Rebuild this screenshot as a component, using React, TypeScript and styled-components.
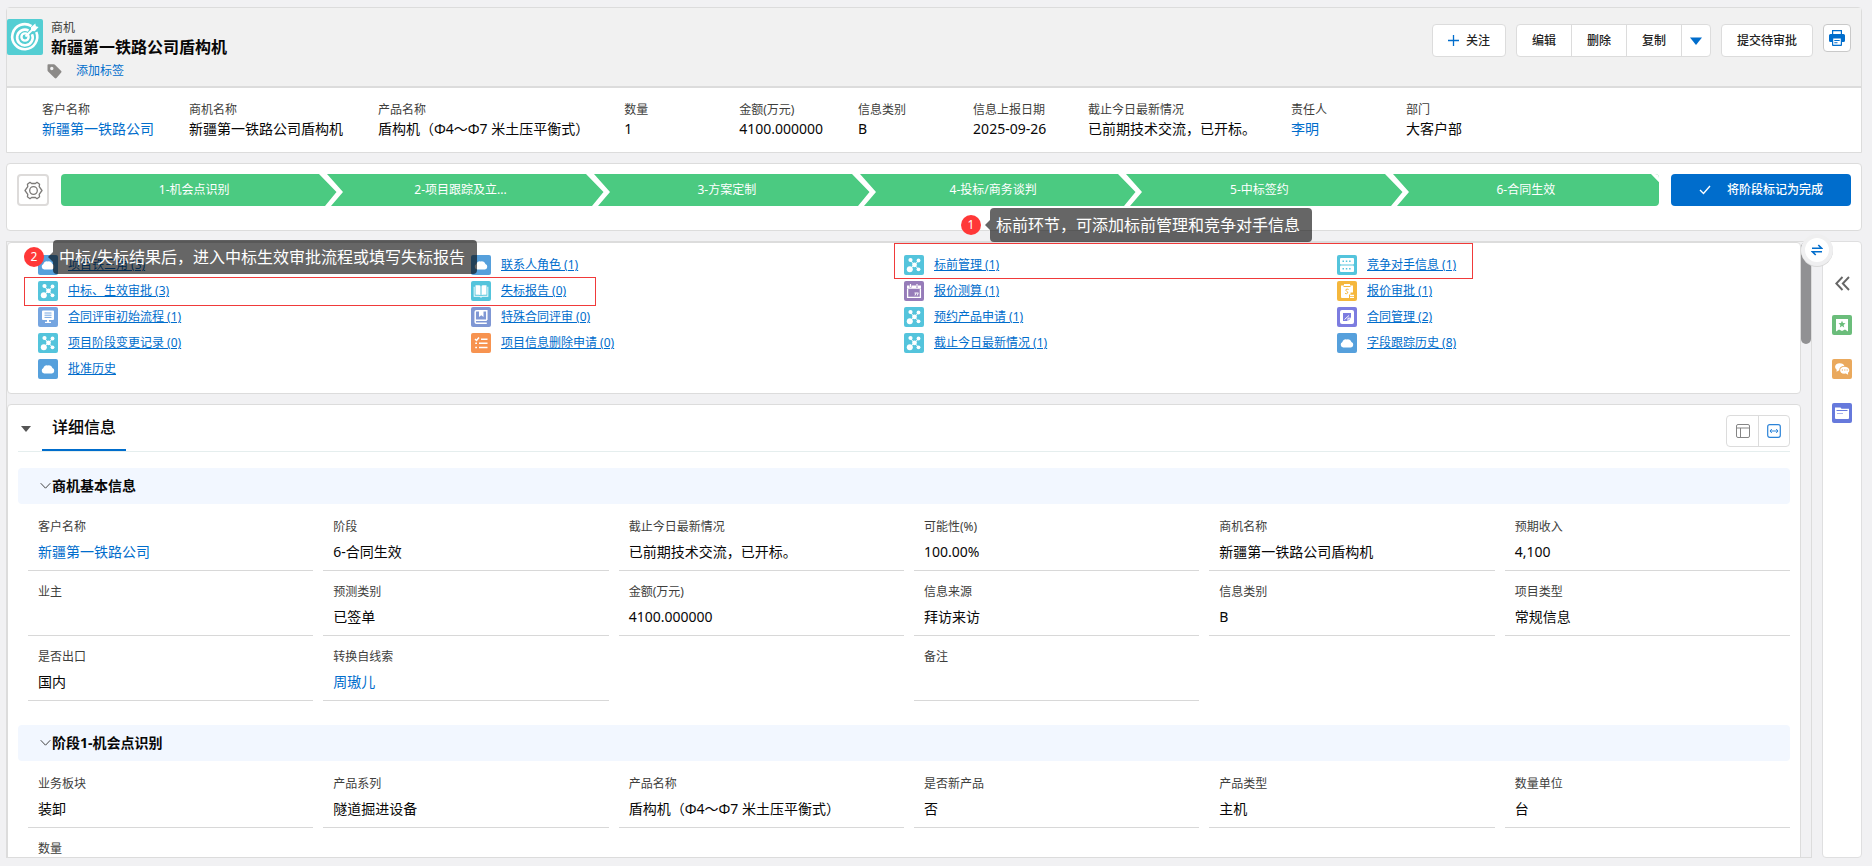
import React from 'react';
import styled, { createGlobalStyle } from 'styled-components';

const BLUE = '#006dcc';
const LINE = '#dcdcdc';

const GlobalStyle = createGlobalStyle`
  *, *::before, *::after { box-sizing: border-box; }
  body {
    margin: 0;
    background: #f1f1f3;
    color: #080707;
    font-family: "Noto Sans", "Noto Sans CJK SC", sans-serif;
    font-size: 14px;
    line-height: 20px;
  }
  button { font: inherit; color: inherit; cursor: pointer; padding: 0; }
  a { color: ${BLUE}; text-decoration: none; }
  dl, dt, dd, ul, ol, h1, h2, h3, p { margin: 0; padding: 0; font-size: inherit; }
  ul, ol { list-style: none; }
  svg { display: block; flex: none; }
`;

const Page = styled.div`
  display: flex;
  flex-direction: column;
  gap: 10px;
  height: 100vh;
  min-height: 600px;
  padding: 7px 10px 8px 6px;
  overflow: hidden;
`;

/* ---------- record header ---------- */

const HeaderCard = styled.header`
  flex: none;
  border: 1px solid ${LINE};
  border-radius: 4px 4px 0 0;
`;

const HeaderTop = styled.div`
  display: flex;
  justify-content: space-between;
  align-items: flex-start;
  height: 80px;
  background: #f1f1f1;
  border-bottom: 2px solid ${LINE};
`;

const Identity = styled.div`
  display: flex;
  gap: 8px;
  padding-top: 11px;
`;

const TitleBlock = styled.div`
  display: flex;
  flex-direction: column;
`;

const ObjectName = styled.p`
  color: #3e3e3c;
  font-size: 12px;
  line-height: 17px;
`;

const RecordTitle = styled.h1`
  font-size: 16px;
  line-height: 22px;
  font-weight: 700;
`;

const TagRow = styled.div`
  display: flex;
  align-items: center;
  gap: 14px;
  margin-left: -4px;
  font-size: 12px;
  line-height: 26px;
`;

const Actions = styled.div`
  display: flex;
  gap: 10px;
  padding: 16px 10px 0 0;
`;

const ButtonGroup = styled.div`
  display: flex;
  height: 33px;
  background: #fff;
  border: 1px solid ${LINE};
  border-radius: 4px;
`;

const ActionButton = styled.button<{ $narrow?: boolean }>`
  display: flex;
  align-items: center;
  gap: 7px;
  padding: 0 ${p => (p.$narrow ? 8 : 15)}px;
  border: 0;
  border-left: 1px solid ${LINE};
  background: none;
  color: #222;
  font-size: 12px;
  font-weight: 500;
  &:first-child { border-left: 0; }
`;

const PrintButton = styled.button`
  display: flex;
  justify-content: center;
  align-items: center;
  width: 28px;
  height: 28px;
  background: #fff;
  border: 1px solid #c9c9c9;
  border-radius: 4px;
`;

const Highlights = styled.dl`
  display: flex;
  gap: 35px;
  height: 64px;
  padding: 12px 35px 0;
  background: #fff;
`;

const Highlight = styled.div`
  min-width: 80px;
  white-space: nowrap;
`;

const Label = styled.dt`
  color: #3e3e3c;
  font-size: 12px;
  line-height: 20px;
`;

const Value = styled.dd`
  line-height: 20px;
`;

const HighlightValue = styled(Value)`
  line-height: 18px;
`;

/* ---------- stage path ---------- */

const PathCard = styled.section`
  display: flex;
  flex: none;
  gap: 12px;
  height: 68px;
  padding: 10px;
  background: #fff;
  border: 1px solid ${LINE};
  border-radius: 4px;
`;

const GearButton = styled.button`
  display: flex;
  justify-content: center;
  align-items: center;
  width: 32px;
  height: 32px;
  background: #fff;
  border: 2px solid #dddbda;
  border-radius: 4px;
`;

const Stages = styled.ol`
  display: flex;
  flex: 1;
  height: 32px;
  border-radius: 4px;
  overflow: hidden;
`;

const Stage = styled.li`
  position: relative;
  flex: 1 1 0;
  background: #4bca81;
  color: #fff;
  font-size: 12px;
  line-height: 32px;
  text-align: center;
`;

const StageEdge = styled.svg`
  position: absolute;
  top: 0;
  right: -18px;
  z-index: 1;
`;

const CompleteButton = styled.button`
  display: flex;
  align-items: center;
  justify-content: center;
  gap: 16px;
  width: 180px;
  height: 32px;
  border: 0;
  border-radius: 4px;
  background: ${BLUE};
  color: #fff;
  font-size: 12px;
  font-weight: 500;
`;

/* ---------- work area ---------- */

const Workspace = styled.div`
  display: flex;
  flex: 1;
  gap: 10px;
  min-height: 0;
`;

const Pane = styled.main`
  position: relative;
  display: flex;
  flex: 1;
  min-width: 0;
  border: 1px solid ${LINE};
`;

const PaneContent = styled.div`
  display: flex;
  flex: 1;
  flex-direction: column;
  gap: 10px;
  min-width: 0;
  overflow: hidden;
`;

const ScrollTrack = styled.div`
  flex: none;
  width: 10px;
`;

const ScrollThumb = styled.div`
  height: 102px;
  border-radius: 5px;
  background: #919193;
`;

const Card = styled.section`
  flex: none;
  background: #fff;
  border: 1px solid ${LINE};
  border-radius: 4px;
`;

const RelatedList = styled.ul`
  display: grid;
  grid-template-columns: repeat(4, 1fr);
  row-gap: 6px;
  padding: 12px 30px 14px;
`;

const RelatedItem = styled.li`
  display: flex;
  align-items: center;
  gap: 10px;
  height: 20px;
  font-size: 12px;
  a { text-decoration: underline; }
`;

const Tile = styled.span<{ $color: string; $size?: number }>`
  display: flex;
  flex: none;
  align-items: center;
  justify-content: center;
  width: ${p => p.$size ?? 20}px;
  height: ${p => p.$size ?? 20}px;
  border-radius: 2px;
  background: ${p => p.$color};
`;

const DetailCard = styled(Card)`
  padding: 0 10px;
`;

const DetailHeader = styled.div`
  display: flex;
  align-items: flex-start;
  height: 47px;
  border-bottom: 1px solid #e5eeee;
`;

const CollapseButton = styled.button`
  display: flex;
  align-items: center;
  width: 24px;
  height: 47px;
  padding-left: 3px;
  border: 0;
  background: none;
`;

const DetailTab = styled.h2`
  padding: 0 10px;
  border-bottom: 2px solid ${BLUE};
  font-size: 16px;
  font-weight: 500;
  line-height: 44px;
`;

const ViewSwitch = styled.div`
  display: flex;
  margin: 10px 0 0 auto;
  height: 32px;
  border: 1px solid ${LINE};
  border-radius: 4px;
`;

const ViewButton = styled.button`
  display: flex;
  align-items: center;
  justify-content: center;
  width: 31px;
  border: 0;
  background: none;
  & + & { border-left: 1px solid ${LINE}; }
`;

const SectionHead = styled.h3<{ $first?: boolean }>`
  display: flex;
  align-items: center;
  height: 36px;
  margin-top: ${p => (p.$first ? 16 : 24)}px;
  border-radius: 4px;
  background: #f2f7ff;
  font-weight: 700;
`;

const SectionToggle = styled.button`
  display: flex;
  align-items: center;
  gap: 1px;
  padding-left: 22px;
  border: 0;
  background: none;
  font-weight: 700;
`;

const Fields = styled.dl`
  display: grid;
  grid-template-columns: repeat(6, 1fr);
  column-gap: 10px;
  padding: 2px 0 0 10px;
`;

const Field = styled.div<{ $blank?: boolean }>`
  height: 65px;
  padding: 11px 10px 0;
  border-bottom: 1px solid ${p => (p.$blank ? 'transparent' : '#d8d8d8')};
`;

const FieldValue = styled(Value)`
  padding-top: 5px;
`;

/* ---------- side rail ---------- */

const Rail = styled.aside`
  position: relative;
  display: flex;
  flex: none;
  flex-direction: column;
  align-items: center;
  gap: 24px;
  width: 40px;
  padding-top: 33px;
  background: #fff;
  border: 1px solid #dfdfe0;
  border-radius: 4px;
`;

const RailButton = styled.button`
  display: flex;
  align-items: center;
  justify-content: center;
  width: 20px;
  height: 20px;
  border: 0;
  background: none;
`;

const ExpandButton = styled(RailButton)`
  height: 16px;
`;

const SwapButton = styled.button`
  position: absolute;
  top: -8px;
  left: -22px;
  z-index: 2;
  display: flex;
  align-items: center;
  justify-content: center;
  width: 32px;
  height: 32px;
  border: 4px solid #efeff0;
  border-radius: 50%;
  background: #fff;
  box-shadow: 0 1px 0 #d8d8d8;
`;

/* ---------- guide marks laid over the page ---------- */

const Frame = styled.div<{ $left: string; $top: number; $width: number; $height: number }>`
  position: absolute;
  left: ${p => p.$left};
  top: ${p => p.$top}px;
  width: ${p => p.$width}px;
  height: ${p => p.$height}px;
  border: 1px solid #f03a3a;
  pointer-events: none;
`;

const Guide = styled.div<{ $left: string; $top: number }>`
  position: absolute;
  left: ${p => p.$left};
  top: ${p => p.$top}px;
  z-index: 3;
  display: flex;
  align-items: center;
`;

const Badge = styled.span`
  width: 20px;
  height: 20px;
  margin-right: 4px;
  border-radius: 50%;
  background: #ff3838;
  color: #fff;
  font-size: 12px;
  text-align: center;
`;

const GuideText = styled.p`
  padding: 0 12px 0 6px;
  border-radius: 4px;
  background: rgba(0, 0, 0, 0.6);
  color: #fff;
  font-size: 16px;
  line-height: 34px;
  white-space: nowrap;
`;

/* ---------- icons ---------- */

type TileKind =
  | 'cloud' | 'nodes' | 'book' | 'board' | 'album' | 'checks'
  | 'server' | 'calendar' | 'quote' | 'note';

const tileColors: Record<TileKind, string> = {
  cloud: '#56a0dc',
  nodes: '#54c4dc',
  book: '#54c4dc',
  board: '#75a5e0',
  album: '#7f97d4',
  checks: '#f79350',
  server: '#54c4dc',
  calendar: '#967cb9',
  quote: '#f5b73c',
  note: '#7c7ce0',
};

const tileArt: Record<TileKind, React.ReactNode> = {
  cloud: <path fill="#fff" d="M6.2 14.500a2.900 2.900 0 0 1-.8-5.500 3.200 3.200 0 0 1 4.400-2.500 3.600 3.600 0 0 1 4.600 2.600 2.800 2.800 0 0 1-.5 5.400z" />,
  nodes: (
    <g fill="#fff">
      <path stroke="#fff" strokeWidth="1" d="M6.500 5.500l3.800 4.300 4.200-4M6 14l4.300-4.200 4 4.200" fill="none" />
      <circle cx="10.500" cy="9.800" r="2.400" />
      <circle cx="6.500" cy="5" r="2.100" />
      <circle cx="14.500" cy="5.500" r="1.900" />
      <circle cx="5.800" cy="14.300" r="3" />
      <circle cx="14.500" cy="14.300" r="1.900" />
    </g>
  ),
  book: (
    <g fill="#fff">
      <path d="M4.500 4.300h3.700q1.300 0 1.300 1.200V14.600q-.5-.800-1.500-.800H4.500zM15.500 4.300h-3.700q-1.300 0-1.300 1.200V14.600q.5-.800 1.500-.800h3.500z" />
      <path d="M2.700 5.800h.900v8.900h4.600q1.200 0 1.800.8.600-.8 1.800-.8h4.600V5.800h.900v10H11.200l-.6.700H9.400l-.6-.7H2.700z" />
    </g>
  ),
  board: (
    <g>
      <path fill="#fff" d="M5 3.500h10a1 1 0 0 1 1 1V12a1 1 0 0 1-1 1h-4v1.700h2v1.300H7v-1.300h2V13H5a1 1 0 0 1-1-1V4.500a1 1 0 0 1 1-1z" />
      <path stroke="#75a5e0" d="M6.500 6h7M6.500 8.200h7M6.500 10.400h7" />
    </g>
  ),
  album: (
    <g>
      <path fill="none" stroke="#fff" strokeWidth="1.500" d="M15.800 13V3.800H5.500q-1.300 0-1.300 1.300v9.800q0 1.300 1.300 1.300h10.300M4.500 13.200h11.300" />
      <path fill="#fff" d="M8 4h4.500v6l-2.200-1.700L8 10z" />
    </g>
  ),
  checks: (
    <path fill="none" stroke="#fff" strokeWidth="1.500" d="M4 6l1.500 1.500L8 4.500M10 6.200h6.500M8 10.300h8.500M8 14.500h8.500M4.200 10.300H6M4.200 14.500H6" />
  ),
  server: (
    <g>
      <rect x="3" y="3" width="14" height="6.500" rx="1" fill="#fff" />
      <rect x="3" y="10.500" width="14" height="6.500" rx="1" fill="#fff" />
      <path stroke="#54c4dc" strokeWidth="1.400" strokeDasharray="1.500 1.800" d="M5.500 6.200h9.500M5.500 13.800h9.500" />
    </g>
  ),
  calendar: (
    <g>
      <path fill="#fff" d="M3 4.500h2.500v2h2v-2H12v2h2v-2h3v3.300H3z" />
      <path fill="#fff" d="M5.900 3h1.200v3H5.900zM12.400 3h1.200v3h-1.200z" />
      <path fill="none" stroke="#fff" strokeWidth="1.300" d="M3.600 8v8.300h12.800V8" />
      <path fill="none" stroke="#fff" strokeWidth="1" d="M11 14.500l.8-2.300M13.300 14.500l.8-2.300M10.500 12h4" />
    </g>
  ),
  quote: (
    <g>
      <path fill="#fff" d="M4 4.500h3V3h6v1.500h3v7h-2.500v2H12V17H5a1 1 0 0 1-1-1z" />
      <path fill="none" stroke="#f5b73c" strokeWidth="1" d="M6.500 5.500h7M11.600 8.500q-1.600-.9-2.600 0t.7 1.700.9 1.900-2.600.2" />
      <path stroke="#fff" strokeWidth="1.200" d="M13 14.300h4M13 16.400h4" />
    </g>
  ),
  note: (
    <g>
      <rect x="3" y="3" width="14" height="14" rx="2" fill="#fff" />
      <path fill="#7c7ce0" d="M6 6h8v5l-3 3H6z" />
      <path fill="none" stroke="#fff" d="M7.500 12.500l4.500-4M11 14v-2.800h3" />
    </g>
  ),
};

const TileIcon = ({ kind }: { kind: TileKind }) => (
  <Tile $color={tileColors[kind]}>
    <svg width="20" height="20" viewBox="0 0 20 20" aria-hidden="true">{tileArt[kind]}</svg>
  </Tile>
);

const TargetIcon = () => (
  <svg width="36" height="36" viewBox="0 0 36 36" fill="none" stroke="#fff" aria-hidden="true">
    <path strokeWidth="2.600" d="M24.500 7.200A12.500 12.500 0 1 0 29.300 13" />
    <path strokeWidth="2.600" d="M21.500 11.600A7.800 7.800 0 1 0 25 15.300" />
    <circle cx="18" cy="18" r="3.600" strokeWidth="2.400" />
    <path strokeWidth="2" d="M18.500 17.500L27 9" />
    <path fill="#fff" stroke="none" d="M24 12V8.300L28.300 4.600l.6 2.700 2.700.6-3.800 4.300z" />
  </svg>
);

const TagIcon = () => (
  <svg width="15" height="15" viewBox="0 0 15 15" aria-hidden="true">
    <path fill="#8c8a88" fillRule="evenodd" d="M1.300.3h5.400q.9 0 1.500.6l6 6q.7.9 0 1.700l-4.700 5.400q-.9.900-1.800 0L1.300 7.800Q.5 7 .5 6.200V1.200q0-.9.800-.9zM4.800 2.800a1.700 1.700 0 1 0 0 3.400 1.700 1.700 0 0 0 0-3.400z" />
  </svg>
);

const PrinterIcon = () => (
  <svg width="16" height="16" viewBox="0 0 16 16" aria-hidden="true">
    <path fill="none" stroke={BLUE} strokeWidth="1.200" d="M3.600 4.500V.7h8.800v3.800" />
    <path fill={BLUE} d="M1.500 4h13Q16 4 16 5.500v5q0 1.500-1.500 1.500H13v3q0 .900-.900.900H3.900Q3 15.900 3 15v-3H1.500Q0 12 0 10.500v-5Q0 4 1.500 4z" />
    <path fill="#fff" d="M4.200 8.500h7.600v6.200H4.200z" />
    <path stroke={BLUE} strokeWidth="1.100" d="M5.300 10.500h5.400M5.300 12.700h3.200" />
  </svg>
);

const GearIcon = () => (
  <svg width="19" height="19" viewBox="0 0 19 19" fill="none" stroke="#7d7b79" strokeWidth="1.300" strokeLinejoin="round" aria-hidden="true">
    <path d="M6 1.300l1.600 1.200h3.800L13 1.300l2.600 1.900-.4 2.500 2.800 3.800-2.800 3.800.4 2.500-2.600 1.900-1.600-1.200H7.600L6 17.700l-2.600-1.900.4-2.500L1 9.500l2.800-3.800-.4-2.500z" />
    <circle cx="9.500" cy="9.500" r="3.800" />
  </svg>
);

const Chevron = () => (
  <svg width="11" height="8" viewBox="0 0 11 8" aria-hidden="true">
    <path fill="none" stroke="#444" d="M.7 1.200l4.800 5 4.800-5" />
  </svg>
);

/* ---------- data ---------- */

interface FieldData {
  label?: string;
  value?: string;
  link?: boolean;
}

const highlights: FieldData[] = [
  { label: '客户名称', value: '新疆第一铁路公司', link: true },
  { label: '商机名称', value: '新疆第一铁路公司盾构机' },
  { label: '产品名称', value: '盾构机（Φ4～Φ7 米土压平衡式）' },
  { label: '数量', value: '1' },
  { label: '金额(万元)', value: '4100.000000' },
  { label: '信息类别', value: 'B' },
  { label: '信息上报日期', value: '2025-09-26' },
  { label: '截止今日最新情况', value: '已前期技术交流，已开标。' },
  { label: '责任人', value: '李明', link: true },
  { label: '部门', value: '大客户部' },
];

const stages = ['1-机会点识别', '2-项目跟踪及立...', '3-方案定制', '4-投标/商务谈判', '5-中标签约', '6-合同生效'];

const related: [TileKind, string][] = [
  ['cloud', '项目铁三角 (3)'],
  ['cloud', '联系人角色 (1)'],
  ['nodes', '标前管理 (1)'],
  ['server', '竞争对手信息 (1)'],
  ['nodes', '中标、生效审批 (3)'],
  ['book', '失标报告 (0)'],
  ['calendar', '报价测算 (1)'],
  ['quote', '报价审批 (1)'],
  ['board', '合同评审初始流程 (1)'],
  ['album', '特殊合同评审 (0)'],
  ['nodes', '预约产品申请 (1)'],
  ['note', '合同管理 (2)'],
  ['nodes', '项目阶段变更记录 (0)'],
  ['checks', '项目信息删除申请 (0)'],
  ['nodes', '截止今日最新情况 (1)'],
  ['cloud', '字段跟踪历史 (8)'],
  ['cloud', '批准历史'],
];

const sections: { title: string; fields: FieldData[] }[] = [
  {
    title: '商机基本信息',
    fields: [
      { label: '客户名称', value: '新疆第一铁路公司', link: true },
      { label: '阶段', value: '6-合同生效' },
      { label: '截止今日最新情况', value: '已前期技术交流，已开标。' },
      { label: '可能性(%)', value: '100.00%' },
      { label: '商机名称', value: '新疆第一铁路公司盾构机' },
      { label: '预期收入', value: '4,100' },
      { label: '业主' },
      { label: '预测类别', value: '已签单' },
      { label: '金额(万元)', value: '4100.000000' },
      { label: '信息来源', value: '拜访来访' },
      { label: '信息类别', value: 'B' },
      { label: '项目类型', value: '常规信息' },
      { label: '是否出口', value: '国内' },
      { label: '转换自线索', value: '周璈儿', link: true },
      {},
      { label: '备注' },
    ],
  },
  {
    title: '阶段1-机会点识别',
    fields: [
      { label: '业务板块', value: '装卸' },
      { label: '产品系列', value: '隧道掘进设备' },
      { label: '产品名称', value: '盾构机（Φ4～Φ7 米土压平衡式）' },
      { label: '是否新产品', value: '否' },
      { label: '产品类型', value: '主机' },
      { label: '数量单位', value: '台' },
      { label: '数量', value: '1' },
    ],
  },
];

const renderValue = (f: FieldData) => (f.link ? <a href="#record">{f.value}</a> : f.value);

export default function App() {
  return (
    <>
      <GlobalStyle />
      <Page>
        <HeaderCard>
          <HeaderTop>
            <Identity>
              <Tile $color="#54ced3" $size={36}><TargetIcon /></Tile>
              <TitleBlock>
                <ObjectName>商机</ObjectName>
                <RecordTitle>新疆第一铁路公司盾构机</RecordTitle>
                <TagRow>
                  <TagIcon />
                  <a href="#tags">添加标签</a>
                </TagRow>
              </TitleBlock>
            </Identity>
            <Actions>
              <ButtonGroup>
                <ActionButton type="button">
                  <svg width="11" height="11" viewBox="0 0 11 11" aria-hidden="true">
                    <path stroke={BLUE} strokeWidth="1.300" d="M5.500 0v11M0 5.500h11" />
                  </svg>
                  关注
                </ActionButton>
              </ButtonGroup>
              <ButtonGroup>
                <ActionButton type="button">编辑</ActionButton>
                <ActionButton type="button">删除</ActionButton>
                <ActionButton type="button">复制</ActionButton>
                <ActionButton type="button" $narrow aria-label="更多操作">
                  <svg width="12" height="8" viewBox="0 0 12 8" aria-hidden="true">
                    <path fill={BLUE} d="M0 .500h12L6 8z" />
                  </svg>
                </ActionButton>
              </ButtonGroup>
              <ButtonGroup>
                <ActionButton type="button">提交待审批</ActionButton>
              </ButtonGroup>
              <PrintButton type="button" aria-label="打印"><PrinterIcon /></PrintButton>
            </Actions>
          </HeaderTop>
          <Highlights>
            {highlights.map(f => (
              <Highlight key={f.label}>
                <Label>{f.label}</Label>
                <HighlightValue>{renderValue(f)}</HighlightValue>
              </Highlight>
            ))}
          </Highlights>
        </HeaderCard>

        <PathCard>
          <GearButton type="button" aria-label="设置"><GearIcon /></GearButton>
          <Stages>
            {stages.map(name => (
              <Stage key={name}>
                {name}
                <StageEdge width="28" height="32" viewBox="0 0 28 32" aria-hidden="true">
                  <path fill="#fff" d="M2 0h8l16 18-12 14H8l11.500-14z" />
                </StageEdge>
              </Stage>
            ))}
          </Stages>
          <CompleteButton type="button">
            <svg width="12" height="10" viewBox="0 0 12 10" aria-hidden="true">
              <path fill="none" stroke="#fff" strokeWidth="1.400" d="M1 5l3.500 3.500L11 1" />
            </svg>
            将阶段标记为完成
          </CompleteButton>
        </PathCard>

        <Workspace>
          <Pane>
            <PaneContent>
              <Card>
                <RelatedList>
                  {related.map(([kind, name]) => (
                    <RelatedItem key={name}>
                      <TileIcon kind={kind} />
                      <a href="#related">{name}</a>
                    </RelatedItem>
                  ))}
                </RelatedList>
              </Card>
              <DetailCard>
                <DetailHeader>
                  <CollapseButton type="button" aria-label="收起">
                    <svg width="10" height="6" viewBox="0 0 10 6" aria-hidden="true">
                      <path fill="#555" d="M0 0h10L5 6z" />
                    </svg>
                  </CollapseButton>
                  <DetailTab>详细信息</DetailTab>
                  <ViewSwitch>
                    <ViewButton type="button" aria-label="布局">
                      <svg width="14" height="14" viewBox="0 0 14 14" fill="none" stroke="#858585" aria-hidden="true">
                        <rect x=".5" y=".5" width="13" height="13" rx="1.500" />
                        <path d="M.500 4h13M4.500 4v9.500" />
                      </svg>
                    </ViewButton>
                    <ViewButton type="button" aria-label="宽度">
                      <svg width="14" height="14" viewBox="0 0 14 14" fill="none" stroke="#2b83d8" aria-hidden="true">
                        <rect x=".7" y=".7" width="12.600" height="12.600" rx="2" strokeWidth="1.200" />
                        <path d="M3 7h8M4.800 5L3 7l1.800 2M9.200 5L11 7 9.200 9" />
                      </svg>
                    </ViewButton>
                  </ViewSwitch>
                </DetailHeader>
                {sections.map((s, i) => (
                  <React.Fragment key={s.title}>
                    <SectionHead $first={i === 0}>
                      <SectionToggle type="button"><Chevron />{s.title}</SectionToggle>
                    </SectionHead>
                    <Fields>
                      {s.fields.map((f, n) => (
                        <Field key={n} $blank={!f.label}>
                          <Label>{f.label}</Label>
                          <FieldValue>{renderValue(f)}</FieldValue>
                        </Field>
                      ))}
                    </Fields>
                  </React.Fragment>
                ))}
              </DetailCard>
            </PaneContent>
            <ScrollTrack><ScrollThumb /></ScrollTrack>

            <Frame $left="calc(50% - 15px)" $top={1} $width={579} $height={36} />
            <Frame $left="17px" $top={35} $width={572} $height={29} />
            <Guide $left="calc(50% + 52px)" $top={-34}>
              <Badge>1</Badge>
              <svg width="5" height="10" viewBox="0 0 5 10" aria-hidden="true"><path fill="#000" fillOpacity=".6" d="M5 0v10L0 5z" /></svg>
              <GuideText>标前环节，可添加标前管理和竞争对手信息</GuideText>
            </Guide>
            <Guide $left="17px" $top={-2}>
              <Badge>2</Badge>
              <svg width="5" height="10" viewBox="0 0 5 10" aria-hidden="true"><path fill="#000" fillOpacity=".6" d="M5 0v10L0 5z" /></svg>
              <GuideText>中标/失标结果后，进入中标生效审批流程或填写失标报告</GuideText>
            </Guide>
          </Pane>
          <Rail>
            <SwapButton type="button" aria-label="切换">
              <svg width="12" height="12" viewBox="0 0 12 12" fill="none" stroke={BLUE} strokeWidth="1.600" aria-hidden="true">
                <path d="M1 4.200h9.500L7.300 1M11 7.800H1.500L4.700 11" />
              </svg>
            </SwapButton>
            <ExpandButton type="button" aria-label="展开">
              <svg width="15" height="15" viewBox="0 0 15 15" fill="none" stroke="#666" strokeWidth="1.900" aria-hidden="true">
                <path d="M7.500 1L1.300 7.500 7.500 14M14 1L7.800 7.500 14 14" />
              </svg>
            </ExpandButton>
            <RailButton type="button" aria-label="收藏">
              <Tile $color="#6bbd7b">
                <svg width="20" height="20" viewBox="0 0 20 20" aria-hidden="true">
                  <path fill="#fff" d="M4 4h12v12.500l-3-2-3 1.500-3-1.500-3 2z" />
                  <path fill="#6bbd7b" d="M10 5.800l1 2.300 2.500.2-1.900 1.600.6 2.500L10 11.100l-2.200 1.300.6-2.500-1.900-1.600 2.500-.2z" />
                </svg>
              </Tile>
            </RailButton>
            <RailButton type="button" aria-label="聊天">
              <Tile $color="#eaa95d">
                <svg width="20" height="20" viewBox="0 0 20 20" aria-hidden="true">
                  <path fill="#fff" d="M7.500 4.300c3 0 4.600 1.400 4.800 2.700-3.300.1-5.200 1.800-5 4.300l-2.800 1.400.2-1.900C1.800 8.600 3 4.300 7.500 4.300z" />
                  <path fill="#fff" d="M12.500 7.800c5 0 6 4.400 3.500 6l.1 1.900-2.200-1.200c-4 .6-5.800-1-5.800-3.300 0-2 1.900-3.400 4.400-3.400z" />
                  <path stroke="#eaa95d" strokeWidth="1.200" strokeDasharray="1.200 1.200" d="M9.800 11h6" />
                </svg>
              </Tile>
            </RailButton>
            <RailButton type="button" aria-label="文件">
              <Tile $color="#6679dc">
                <svg width="20" height="20" viewBox="0 0 20 20" aria-hidden="true">
                  <path fill="#fff" d="M3 4.500h5.500l1 1.200H17V15a1 1 0 0 1-1 1H4a1 1 0 0 1-1-1z" />
                  <path stroke="#6679dc" d="M4.500 7.500h11" />
                  <path stroke="#aab4ec" d="M5 10.500h6" />
                </svg>
              </Tile>
            </RailButton>
          </Rail>
        </Workspace>
      </Page>
    </>
  );
}
